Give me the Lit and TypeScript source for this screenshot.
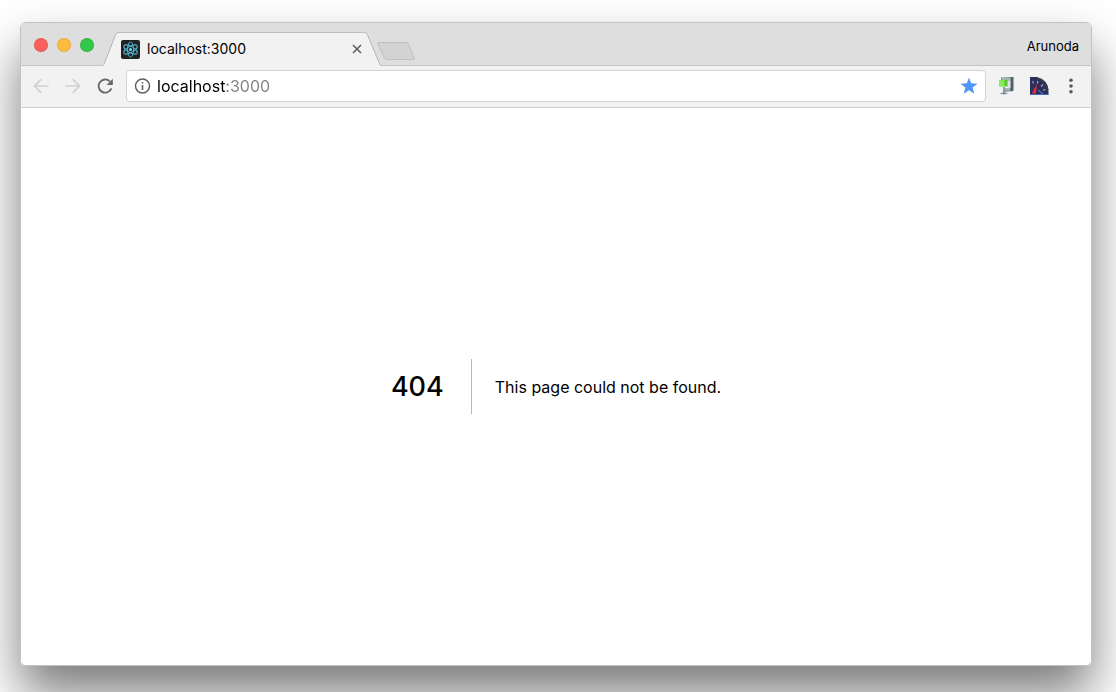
import { LitElement, html, css, svg } from "lit";
import { customElement, property } from "lit/decorators.js";

@customElement("tab-strip")
class TabStrip extends LitElement {
  @property() label = "";
  @property() profile = "";

  static styles = css`
    :host {
      display: flex;
      align-items: flex-end;
      height: 43px;
      background: #dedede;
      box-shadow: inset 0 -1px #c3c3c3;
    }
    button {
      appearance: none;
      border: 0;
      padding: 0;
      background: none;
      color: inherit;
      font: inherit;
    }
    svg {
      display: block;
      flex: none;
    }
    .lights {
      display: flex;
      gap: 9px;
      padding: 0 9px 14px 13px;
    }
    .light {
      width: 14px;
      height: 14px;
      border-radius: 50%;
      border: 1px solid #00000018;
    }
    .close { background: #fc605c; }
    .minimise { background: #fdbc40; }
    .zoom { background: #34c84a; }
    .tab {
      display: flex;
      flex: 0 1 278px;
      min-width: 0;
    }
    .face {
      flex: 1;
      min-width: 0;
      display: flex;
      align-items: center;
      height: 34px;
      box-sizing: border-box;
      border-top: 1px solid #bdbdbd;
      background: #f2f2f2;
      padding: 0 0 1px 2px;
    }
    .title {
      flex: 1;
      padding-left: 7px;
      font-size: 14px;
      line-height: 20px;
      white-space: nowrap;
    }
    .new {
      margin-left: -4px;
      padding-bottom: 6px;
    }
    .profile {
      margin-left: auto;
      padding: 0 12px 10px 0;
      font-size: 13px;
      line-height: 20px;
    }
  `;

  render() {
    return html`
      <div class="lights">
        <button class="light close" aria-label="Close window"></button>
        <button class="light minimise" aria-label="Minimise window"></button>
        <button class="light zoom" aria-label="Zoom window"></button>
      </div>
      <div class="tab">
        <svg width="16" height="34" viewBox="0 0 16 34">
          <path d="M0 34 L1 32.4 L12.6 2.6 Q13.5 .5 16 .5 V34Z" fill="#f2f2f2" />
          <path d="M-1 33.5 Q.4 33.5 1 32.2 L12.6 2.6 Q13.5 .5 16 .5" fill="none" stroke="#b4b4b4" />
        </svg>
        <div class="face">
          <svg width="19" height="19" viewBox="0 0 19 19">
            <rect width="19" height="19" rx="2" fill="#222" />
            <g fill="none" stroke="#4fb9d3" stroke-width="1">
              ${[30, 90, 150].map(
                (a) => svg`<ellipse cx="9.5" cy="9.5" rx="7.6" ry="3" transform="rotate(${a} 9.5 9.5)" />`
              )}
            </g>
            <circle cx="9.5" cy="9.5" r="1.6" fill="#61dafb" />
          </svg>
          <span class="title">${this.label}</span>
          <button aria-label="Close tab">
            <svg width="17" height="16" viewBox="0 0 17 16">
              <path d="M5 4 L13 12 M13 4 L5 12" stroke="#5a5a5a" stroke-width="1.5" />
            </svg>
          </button>
        </div>
        <svg width="16" height="34" viewBox="0 0 16 34">
          <path d="M0 .5 Q1.6 .5 2.4 2.6 L14.8 32.4 L16 34 H0Z" fill="#f2f2f2" />
          <path d="M0 .5 Q1.6 .5 2.4 2.6 L14.8 32.2 Q15.2 33.5 17 33.5" fill="none" stroke="#b4b4b4" />
        </svg>
      </div>
      <button class="new" aria-label="New tab">
        <svg width="38" height="18" viewBox="0 0 38 18">
          <path d="M2 .5 H29 Q30.6 .5 31.3 2 L37.2 15.6 Q38 17.5 36 17.5 H10 Q8.2 17.5 7.4 16 L.8 2 Q.2 .5 2 .5Z"
            fill="#d3d3d3" stroke="#bfbfbf" />
        </svg>
      </button>
      <span class="profile">${this.profile}</span>
    `;
  }
}

@customElement("nav-bar")
class NavBar extends LitElement {
  @property() address = "";

  static styles = css`
    :host {
      display: flex;
      align-items: center;
      height: 42px;
      box-sizing: border-box;
      border-bottom: 1px solid #d0d0d0;
      background: #f2f2f2;
      padding: 0 12px 1px;
    }
    button {
      appearance: none;
      border: 0;
      padding: 0;
      background: none;
      display: block;
    }
    svg {
      display: block;
    }
    .history {
      display: flex;
      gap: 16px;
      padding-right: 13px;
    }
    .omnibox {
      flex: 1;
      min-width: 0;
      display: flex;
      align-items: center;
      height: 32px;
      box-sizing: border-box;
      border: 1px solid #d2d2d2;
      border-radius: 4px;
      background: #fff;
      padding: 0 7px;
    }
    .address {
      appearance: none;
      flex: 1;
      min-width: 0;
      border: 0;
      outline: 0;
      padding: 0 0 0 6px;
      font: inherit;
      font-size: 16px;
      line-height: 24px;
      color: transparent;
      caret-color: #000;
      background: linear-gradient(90deg, #000 74px, #808080 74px);
      -webkit-background-clip: text;
      background-clip: text;
    }
    .extensions {
      display: flex;
      align-items: center;
      gap: 13px;
      padding-left: 10px;
    }
  `;

  render() {
    return html`
      <div class="history">
        <button aria-label="Back">
          <svg width="16" height="16" viewBox="0 0 16 16" fill="none" stroke="#d0d0d0" stroke-width="1.7">
            <path d="M15.5 8 H2 M8.3 1.2 L1.5 8 L8.3 14.8" />
          </svg>
        </button>
        <button aria-label="Forward">
          <svg width="16" height="16" viewBox="0 0 16 16" fill="none" stroke="#d0d0d0" stroke-width="1.7">
            <path d="M.5 8 H14 M7.7 1.2 L14.5 8 L7.7 14.8" />
          </svg>
        </button>
        <button aria-label="Reload">
          <svg width="16" height="16" viewBox="0 0 16 16">
            <path d="M14.4 10.4 A6.6 6.6 0 1 1 12.8 3.3" fill="none" stroke="#666" stroke-width="1.8" />
            <path d="M15.8 .8 V7 H9.6Z" fill="#666" />
          </svg>
        </button>
      </div>
      <div class="omnibox">
        <button aria-label="Site information">
          <svg width="17" height="16" viewBox="0 0 17 16">
            <circle cx="8.5" cy="8" r="7" fill="none" stroke="#5f5f5f" stroke-width="1.5" />
            <path d="M8.5 7 V12 M8.5 4 V5.6" stroke="#5f5f5f" stroke-width="1.6" />
          </svg>
        </button>
        <input class="address" type="text" aria-label="Address" spellcheck="false" .value=${this.address} />
        <button aria-label="Bookmark this page">
          <svg width="18" height="18" viewBox="0 0 18 18">
            <path d="M9 .4 L11.2 6.3 L17.6 6.7 L12.6 10.6 L14.3 16.8 L9 13.3 L3.7 16.8 L5.4 10.6 L.4 6.7 L6.8 6.3Z" fill="#4f97f5" />
          </svg>
        </button>
      </div>
      <div class="extensions">
        <button aria-label="Archive extension">
          <svg width="20" height="20" viewBox="0 0 20 20">
            <path d="M5 1.5 L17 1 V15 L7 16 V12 H13 V5 H5Z" fill="#77868b" />
            <path d="M14.5 1.2 L17.5 1 V14.8 L14.5 15.3Z" fill="#4f6068" />
            <path d="M6 2 H14.5 V4.5 H6Z" fill="#a9b8bc" />
            <path d="M11.3 4.5 H14.5 V12 H11.3Z" fill="#dbe3e4" />
            <path d="M7 12 H14 V14.5 H7Z" fill="#aab7ba" />
            <path d="M8 11 V17" stroke="#8c999d" stroke-width="2" />
            <path d="M3 17.2 L8 16.5 L12.5 17.2 L8 18.6Z" fill="#7d8d93" />
            <path d="M3 4.5 L11.5 3.6 V10.5 L3 10.2Z" fill="#54c52b" />
            <path d="M3 4.5 L8.5 4 V10.4 L3 10.2Z" fill="#87ec56" />
          </svg>
        </button>
        <button aria-label="Speed extension">
          <svg width="20" height="20" viewBox="0 0 20 20">
            <path d="M1 1 H7 Q18.5 4 19.5 15 V19 H1Z" fill="#29305c" />
            <path d="M7 1.6 Q18 4.6 18.7 14" fill="none" stroke="#3a3d45" stroke-width="2" />
            <path d="M1 18.5 H19.5" stroke="#4267bd" />
            <path d="M4 5 V7.5 M9 5 L8.2 7.5 M14 8.5 L12 10.5 M16.5 13.5 L14 14.3" stroke="#aab0d0" stroke-width="1.1" />
            <path d="M8 8 L6.8 17.5 H3 L4.5 14Z" fill="#f32b2d" />
            <path d="M9 14 L14 18" stroke="#7788c8" />
          </svg>
        </button>
        <button aria-label="Menu">
          <svg width="17" height="18" viewBox="0 0 17 18" fill="#5a5a5a">
            <circle cx="9" cy="3.2" r="1.8" />
            <circle cx="9" cy="9" r="1.8" />
            <circle cx="9" cy="14.8" r="1.8" />
          </svg>
        </button>
      </div>
    `;
  }
}

@customElement("error-page")
class ErrorPage extends LitElement {
  @property() code = "";
  @property() message = "";

  static styles = css`
    :host {
      display: flex;
      align-items: center;
      justify-content: center;
      background: #fff;
    }
    .code {
      margin: 0 23px 0 0;
      padding-right: 27px;
      border-right: 1px solid #b8b8b8;
      font-size: 27px;
      font-weight: 500;
      line-height: 55px;
    }
    .message {
      margin: 0;
      font-size: 16px;
      font-weight: 400;
      line-height: 24px;
    }
  `;

  render() {
    return html`
      <h1 class="code">${this.code}</h1>
      <h2 class="message">${this.message}</h2>
    `;
  }
}

@customElement("app-root")
class AppRoot extends LitElement {
  static styles = css`
    :host {
      display: flex;
      box-sizing: border-box;
      height: 100vh;
      overflow: hidden;
      padding: 22px 24px 26px 20px;
      background: #fff;
      color: #000;
      font-family: Inter, "Liberation Sans", sans-serif;
    }
    .window {
      flex: 1;
      min-width: 0;
      display: flex;
      flex-direction: column;
      border: 1px solid #c2c2c2;
      border-radius: 6px;
      overflow: hidden;
      box-shadow: 0 28px 50px rgba(0, 0, 0, 0.52);
    }
    .page {
      flex: 1;
    }
  `;

  render() {
    return html`
      <div class="window">
        <tab-strip label="localhost:3000" profile="Arunoda"></tab-strip>
        <nav-bar address="localhost:3000"></nav-bar>
        <error-page class="page" code="404" message="This page could not be found."></error-page>
      </div>
    `;
  }
}
